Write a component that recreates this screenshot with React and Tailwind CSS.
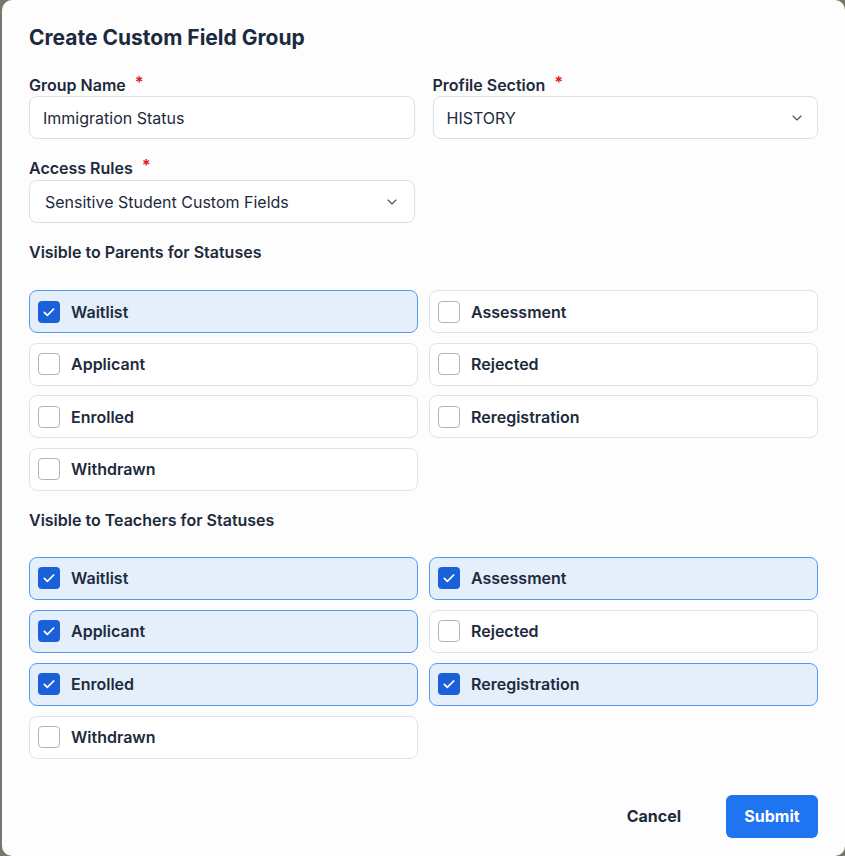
import React from "react";
import { ChevronDown } from "lucide-react";

const FONT = { fontFamily: "Inter, 'Noto Sans', sans-serif" };

function Label({ children }) {
  return (
    <div className="flex items-center h-[20px] text-[16px] leading-[20px] font-semibold text-[#1d2a3c]">
      <span>{children}</span>
      <span className="ml-[9px] text-[#e5181e] text-[16px] font-bold relative top-[-3px]">*</span>
    </div>
  );
}

function Box({ checked }) {
  if (checked) {
    return (
      <div className="w-[22px] h-[22px] rounded-[4px] bg-[#1a60da] flex items-center justify-center shrink-0">
        <svg width="16" height="16" viewBox="0 0 24 24" fill="none" stroke="white" strokeWidth="2.6" strokeLinecap="round" strokeLinejoin="round">
          <path d="M5 12.5l4.5 4.5L19 7.5" />
        </svg>
      </div>
    );
  }
  return <div className="w-[22px] h-[22px] rounded-[4px] border-[1.5px] border-[#aab5c4] bg-white shrink-0" />;
}

function Option({ label, checked }) {
  return (
    <div
      className={
        "h-[43px] rounded-[8px] border flex items-center pl-[8px] gap-[11px] " +
        (checked ? "bg-[#e5effc] border-[#5498f3]" : "bg-white border-[#dbe4ef]")
      }
    >
      <Box checked={checked} />
      <span className="text-[16px] font-semibold text-[#1d2a3c]">{label}</span>
    </div>
  );
}

function Group({ title, items, gapClass, topClass }) {
  return (
    <div>
      <div className="h-[20px] text-[16px] leading-[20px] font-semibold text-[#1d2a3c]">{title}</div>
      <div className={"grid grid-cols-2 gap-x-[11px] " + gapClass + " " + topClass}>
        {items.map((it, i) =>
          it ? <Option key={i} label={it[0]} checked={it[1]} /> : <div key={i} />
        )}
      </div>
    </div>
  );
}

export default function App() {
  const parents = [
    ["Waitlist", true],
    ["Assessment", false],
    ["Applicant", false],
    ["Rejected", false],
    ["Enrolled", false],
    ["Reregistration", false],
    ["Withdrawn", false],
    null,
  ];
  const teachers = [
    ["Waitlist", true],
    ["Assessment", true],
    ["Applicant", true],
    ["Rejected", false],
    ["Enrolled", true],
    ["Reregistration", true],
    ["Withdrawn", false],
    null,
  ];
  return (
    <div className="w-[845px] h-[856px] bg-[#77776c] overflow-hidden" style={FONT}>
      <div className="ml-[2px] w-[843px] h-[856px] bg-[#fdfdfe] rounded-[10px] px-[27px] pt-[26px]">
        <h1 className="text-[21px] leading-[24px] font-bold text-[#1b2a3f]">Create Custom Field Group</h1>

        <div className="mt-[25px] grid grid-cols-2 gap-x-[18px]">
          <div>
            <Label>Group Name</Label>
            <div className="mt-[1px] h-[43px] rounded-[8px] border border-[#d7e1ee] bg-white flex items-center px-[13px] text-[16px] text-[#1d2a3c]">
              Immigration Status
            </div>
          </div>
          <div>
            <Label>Profile Section</Label>
            <div className="mt-[1px] h-[43px] rounded-[8px] border border-[#d7e1ee] bg-white flex items-center justify-between pl-[13px] pr-[12px] text-[16px] text-[#1d2a3c]">
              <span>HISTORY</span>
              <ChevronDown size={16} strokeWidth={1.75} className="text-[#4a5668]" />
            </div>
          </div>
        </div>

        <div className="mt-[19px] w-[386px]">
          <Label>Access Rules</Label>
          <div className="mt-[2px] h-[43px] rounded-[8px] border border-[#d7e1ee] bg-white flex items-center justify-between pl-[15px] pr-[14px] text-[16px] text-[#1d2a3c]">
            <span>Sensitive Student Custom Fields</span>
            <ChevronDown size={16} strokeWidth={1.75} className="text-[#4a5668]" />
          </div>
        </div>

        <div className="mt-[19px]">
          <Group title="Visible to Parents for Statuses" items={parents} gapClass="gap-y-[9.5px]" topClass="mt-[28px]" />
        </div>
        <div className="mt-[19px]">
          <Group title="Visible to Teachers for Statuses" items={teachers} gapClass="gap-y-[10px]" topClass="mt-[27px]" />
        </div>

        <div className="mt-[36px] flex justify-end items-center">
          <button className="text-[16px] font-bold text-[#1d2a3c] mr-[45px]">Cancel</button>
          <button className="h-[43px] w-[92px] rounded-[6px] bg-[#1f74f1] text-white text-[16px] font-bold">Submit</button>
        </div>
      </div>
    </div>
  );
}
